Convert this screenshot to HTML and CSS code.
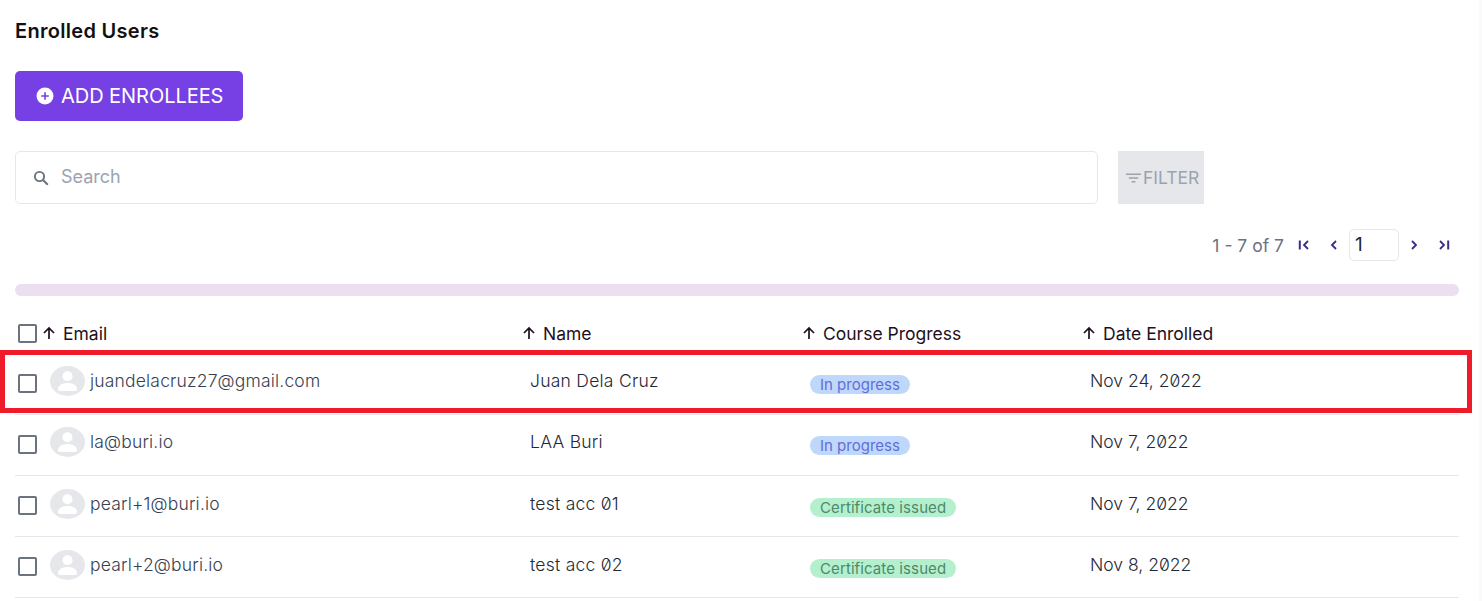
FILE: index.html
```html
<!DOCTYPE html>
<html lang="en">
<head>
<meta charset="utf-8">
<title>Enrolled Users</title>
<link rel="stylesheet" href="styles.css">
</head>
<body>
<div class="shell">
<main class="page">
  <h1 class="title">Enrolled Users</h1>
  <button class="add-btn" type="button">
    <svg class="add-icon" viewBox="0 0 18 18" aria-hidden="true"><circle cx="9" cy="9" r="8.5" fill="#fff"/><path d="M9 5.2v7.6M5.2 9h7.6" stroke="#7740e4" stroke-width="1.6"/></svg>
    ADD ENROLLEES
  </button>
  <div class="search-row">
    <label class="search">
      <svg class="search-icon" viewBox="0 0 16 16" aria-hidden="true"><circle cx="6.500" cy="6.500" r="4.600" fill="none" stroke="#6b7280" stroke-width="1.900"/><path d="M9.800 9.800l5 5" stroke="#6b7280" stroke-width="2"/></svg>
      <input class="search-input" type="text" placeholder="Search">
    </label>
    <div class="filter">
      <svg class="filter-icon" viewBox="0 0 16 10" aria-hidden="true"><path d="M0 1h16M3 5h10M6 9h4" stroke="#9ca3af" stroke-width="1.400"/></svg>
      FILTER
    </div>
  </div>
  <div class="pager">
    <span class="pager-text">1 - 7 of 7</span>
    <svg class="pager-icon first" viewBox="0 0 12 12" aria-hidden="true"><path d="M1.800 1.500v9" stroke="#3b2a8c" stroke-width="2"/><path d="M10 2L6 6l4 4" fill="none" stroke="#3b2a8c" stroke-width="1.800"/></svg>
    <svg class="pager-icon prev" viewBox="0 0 12 12" aria-hidden="true"><path d="M8 2L4 6l4 4" fill="none" stroke="#3b2a8c" stroke-width="1.800"/></svg>
    <div class="page-box">1</div>
    <svg class="pager-icon next" viewBox="0 0 12 12" aria-hidden="true"><path d="M4 2l4 4-4 4" fill="none" stroke="#3b2a8c" stroke-width="1.800"/></svg>
    <svg class="pager-icon last" viewBox="0 0 12 12" aria-hidden="true"><path d="M2 2l4 4-4 4" fill="none" stroke="#3b2a8c" stroke-width="1.800"/><path d="M10.200 1.500v9" stroke="#3b2a8c" stroke-width="2"/></svg>
  </div>
  <div class="progress-track"></div>

  <div class="table">
    <div class="row head">
      <div class="cell email-cell"><span class="check"></span>
        <svg class="arrow" viewBox="0 0 13 14" aria-hidden="true"><path d="M6 13V2.500M1 7l5-5 5 5" fill="none" stroke="#1f1020" stroke-width="1.700"/></svg>Email</div>
      <div class="cell"><svg class="arrow" viewBox="0 0 13 14" aria-hidden="true"><path d="M6 13V2.500M1 7l5-5 5 5" fill="none" stroke="#1f1020" stroke-width="1.700"/></svg>Name</div>
      <div class="cell"><svg class="arrow" viewBox="0 0 13 14" aria-hidden="true"><path d="M6 13V2.500M1 7l5-5 5 5" fill="none" stroke="#1f1020" stroke-width="1.700"/></svg>Course Progress</div>
      <div class="cell"><svg class="arrow" viewBox="0 0 13 14" aria-hidden="true"><path d="M6 13V2.500M1 7l5-5 5 5" fill="none" stroke="#1f1020" stroke-width="1.700"/></svg>Date Enrolled</div>
    </div>

    <div class="row body upper">
      <div class="cell email-cell"><span class="check"></span><span class="avatar"><svg viewBox="0 0 35 30" aria-hidden="true"><circle cx="17.500" cy="10.300" r="5" fill="#fff"/><path d="M8 23c0-4 5-6 9.500-6s9.500 2 9.500 6c0 1.200-.8 2-2 2H10c-1.200 0-2-.8-2-2z" fill="#fff"/></svg></span><span class="email">juandelacruz27@gmail.com</span></div>
      <div class="cell text">Juan Dela Cruz</div>
      <div class="cell"><span class="badge blue">In progress</span></div>
      <div class="cell date">Nov 24, 2022</div>
    </div>
    <div class="row body upper">
      <div class="cell email-cell"><span class="check"></span><span class="avatar"><svg viewBox="0 0 35 30" aria-hidden="true"><circle cx="17.500" cy="10.300" r="5" fill="#fff"/><path d="M8 23c0-4 5-6 9.500-6s9.500 2 9.500 6c0 1.200-.8 2-2 2H10c-1.200 0-2-.8-2-2z" fill="#fff"/></svg></span><span class="email">la@buri.io</span></div>
      <div class="cell text">LAA Buri</div>
      <div class="cell"><span class="badge blue">In progress</span></div>
      <div class="cell date">Nov 7, 2022</div>
    </div>
    <div class="row body">
      <div class="cell email-cell"><span class="check"></span><span class="avatar"><svg viewBox="0 0 35 30" aria-hidden="true"><circle cx="17.500" cy="10.300" r="5" fill="#fff"/><path d="M8 23c0-4 5-6 9.500-6s9.500 2 9.500 6c0 1.200-.8 2-2 2H10c-1.200 0-2-.8-2-2z" fill="#fff"/></svg></span><span class="email">pearl+1@buri.io</span></div>
      <div class="cell text">test acc 01</div>
      <div class="cell"><span class="badge green">Certificate issued</span></div>
      <div class="cell date">Nov 7, 2022</div>
    </div>
    <div class="row body">
      <div class="cell email-cell"><span class="check"></span><span class="avatar"><svg viewBox="0 0 35 30" aria-hidden="true"><circle cx="17.500" cy="10.300" r="5" fill="#fff"/><path d="M8 23c0-4 5-6 9.500-6s9.500 2 9.500 6c0 1.200-.8 2-2 2H10c-1.200 0-2-.8-2-2z" fill="#fff"/></svg></span><span class="email">pearl+2@buri.io</span></div>
      <div class="cell text">test acc 02</div>
      <div class="cell"><span class="badge green">Certificate issued</span></div>
      <div class="cell date">Nov 8, 2022</div>
    </div>
    <div class="highlight"></div>
  </div>
</main>
<div class="scroll-strip"></div>
</div>
</body>
</html>
```

FILE: styles.css
```css
* { box-sizing: border-box; }
html, body { margin: 0; height: 100%; overflow: hidden; }
body { background: #fff; font-family: Inter, "Noto Sans", sans-serif; color: #1f2937; font-feature-settings: "zero" 1; }
.shell { display: flex; height: 601px; }
.page { flex: 1; padding: 20px 20px 0 15px; min-width: 0; }
.scroll-strip { width: 3px; background: #fafafa; }
.title { margin: 0; font-size: 20px; line-height: 22px; font-weight: 600; color: #111; letter-spacing: 0.3px; }
.add-btn { margin-top: 29px; width: 228px; height: 50px; display: flex; align-items: center; padding: 0 0 0 21px; gap: 7px; background: #7740e4; border: 0; border-radius: 5px; color: #fff; font: inherit; font-size: 20px; letter-spacing: -0.05px; }
.add-icon { width: 18px; height: 18px; flex: none; }
.search-row { margin-top: 30px; display: flex; gap: 20px; }
.search { width: 1083px; height: 53px; border: 1px solid #e5e7eb; border-radius: 5px; display: flex; align-items: center; padding-left: 17px; gap: 12px; }
.search-icon { width: 16px; height: 16px; flex: none; }
.search-input { border: 0; outline: 0; flex: 1; font: inherit; font-size: 18px; padding: 0 0 2px; }
.search-input::placeholder { color: #9ca3af; }
.filter { width: 86px; height: 53px; background: #e5e7eb; color: #9ca3af; font-size: 17.5px; display: flex; align-items: center; padding-left: 8px; gap: 2px; }
.filter-icon { width: 15px; height: 10px; flex: none; }
.pager { margin-top: 25px; height: 32px; display: flex; align-items: center; justify-content: flex-end; padding-right: 9px; color: #6b7280; }
.pager-text { font-size: 17.5px; margin-right: 14px; }
.pager-icon { width: 12px; height: 12px; }
.pager-icon.prev { margin-left: 18px; }
.page-box { margin-left: 9px; width: 50px; height: 32px; border: 1px solid #e5e7eb; border-radius: 5px; color: #1f2937; font-size: 19px; line-height: 30px; padding-left: 5px; }
.pager-icon.next { margin-left: 9px; }
.pager-icon.last { margin-left: 18px; }
.progress-track { margin-top: 23px; height: 12px; border-radius: 6px; background: #ebdff0; }
.table { position: relative; }
.row { display: grid; grid-template-columns: 508px 280px 280px 1fr; }
.row.head { margin-top: 17px; height: 41px; font-size: 17.5px; color: #1f1020; }
.row.head .cell { display: flex; align-items: center; gap: 7px; padding-bottom: 1px; }
.row.body { height: 61px; border-bottom: 1px solid #e5e7eb; }
.row.body .cell { display: flex; align-items: center; font-size: 17.5px; font-weight: 350; padding-bottom: 5px; }
.row.body.upper .cell { padding-bottom: 7px; }
.check { width: 19px; height: 19px; margin-left: 3px; border: 2px solid #6b7280; border-radius: 2px; flex: none; background: #fff; }
.row.body .check { margin-top: 4px; }
.row.body.upper .check { margin-top: 6px; }
.row.head .check { margin-right: -1px; }
.arrow { width: 13px; height: 14px; flex: none; }
.email-cell { gap: 0; }
.avatar { margin-left: 13px; width: 35px; height: 30px; border-radius: 50%; background: #e5e7eb; flex: none; display: flex; }
.avatar svg { width: 100%; height: 100%; }
.email { margin-left: 5px; color: #374151; letter-spacing: 0.18px; }
.text { padding-left: 7px; color: #1f2937; letter-spacing: 0.25px; }
.date { padding-left: 7px; color: #1f2937; }
.badge { margin-left: 7px; margin-top: 7px; font-size: 15px; font-weight: 400; line-height: 19px; padding: 0 10px; border-radius: 10px; }
.upper .badge { margin-top: 7px; }
.badge.blue { background: #bfd7fb; color: #5f6fd8; }
.badge.green { background: #b5f0ce; color: #4b8a6a; letter-spacing: 0.1px; }
.highlight { position: absolute; left: -15px; top: 37px; width: 1472px; height: 63px; border: 5px solid #ef1b2b; pointer-events: none; }
```
